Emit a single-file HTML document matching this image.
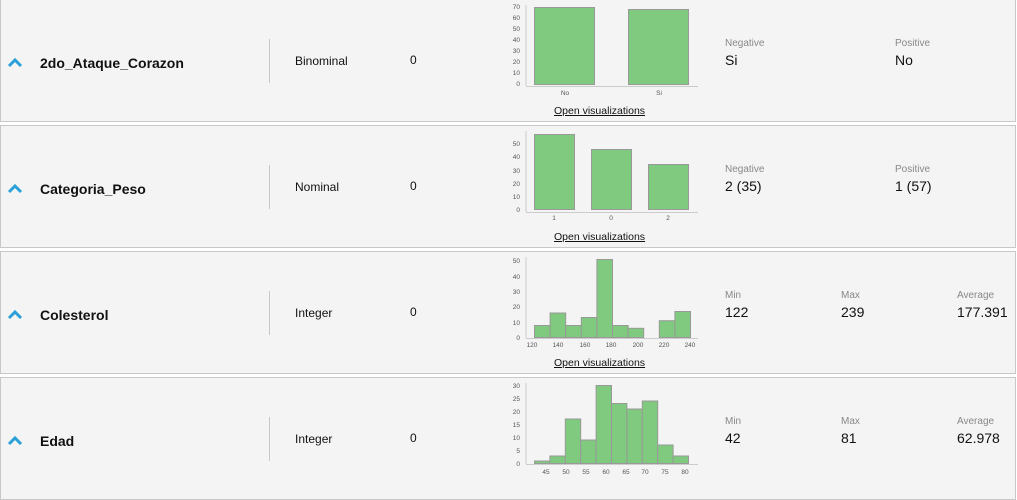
<!DOCTYPE html>
<html><head><meta charset="utf-8"><style>
body{margin:0;width:1017px;height:479px;background:#fff;font-family:"Liberation Sans",Arial,sans-serif;position:relative;overflow:hidden}
.row{position:absolute;left:0;width:1014px;height:121px;background:#f4f4f4;border:1px solid #c8c8c8}
.a{position:absolute;white-space:nowrap}
.name{font-weight:bold;font-size:14px;color:#111;left:40px}
.div{position:absolute;left:269px;width:1px;background:#c8c8c8}
.t{font-size:12px;color:#111}
.lab{font-size:10px;color:#888}
.val{font-size:14px;color:#111}
.lnk{font-size:10.5px;color:#111;text-decoration:underline;left:554px}
svg{position:absolute;left:0;top:0}
</style></head><body>
<div class="row" style="top:-1px"></div>
<div class="row" style="top:125px"></div>
<div class="row" style="top:251px"></div>
<div class="row" style="top:377px"></div>

<svg width="1017" height="479" font-family="Liberation Sans, Arial, sans-serif" font-size="6.5" fill="#555">
<g stroke="#2a9fd8" stroke-width="3" fill="none">
<polyline points="9,66 15,60 21,66"/><polyline points="9,192 15,186 21,192"/><polyline points="9,318 15,312 21,318"/><polyline points="9,444 15,438 21,444"/>
</g>
<g stroke="#ccc" stroke-width="1">
<line x1="526" y1="5" x2="526" y2="86"/><line x1="526" y1="86.5" x2="698" y2="86.5"/>
<line x1="526" y1="131" x2="526" y2="212"/><line x1="526" y1="212.5" x2="698" y2="212.5"/>
<line x1="526" y1="257" x2="526" y2="338"/><line x1="526" y1="338.5" x2="698" y2="338.5"/>
<line x1="526" y1="383" x2="526" y2="464"/><line x1="526" y1="464.5" x2="698" y2="464.5"/>
</g>
<g fill="#7fca7f" stroke="#999" stroke-width="1">
<rect x="534.5" y="7.5" width="60" height="77"/><rect x="628.5" y="9.5" width="60" height="75"/>
<rect x="534.5" y="134.5" width="40" height="75"/><rect x="591.5" y="149.5" width="40" height="60"/><rect x="648.5" y="164.5" width="40" height="45"/>
<rect x="534.5" y="325.5" width="15.6" height="12"/><rect x="550.1" y="313" width="15.6" height="24.5"/><rect x="565.7" y="325.5" width="15.6" height="12"/><rect x="581.3" y="317.5" width="15.6" height="20"/><rect x="596.9" y="259.5" width="15.6" height="78"/><rect x="612.5" y="325.5" width="15.6" height="12"/><rect x="628.1" y="328.3" width="15.6" height="9.2"/><rect x="659.3" y="320.7" width="15.6" height="16.8"/><rect x="674.9" y="311.5" width="15.6" height="26"/>
<rect x="534.5" y="461" width="15.4" height="2.5"/><rect x="549.9" y="456" width="15.4" height="7.5"/><rect x="565.3" y="419" width="15.4" height="44.5"/><rect x="580.7" y="440" width="15.4" height="23.5"/><rect x="596.1" y="385.5" width="15.4" height="78"/><rect x="611.5" y="403.5" width="15.4" height="60"/><rect x="626.9" y="409" width="15.4" height="54.5"/><rect x="642.3" y="401" width="15.4" height="62.5"/><rect x="657.7" y="445" width="15.4" height="18.5"/><rect x="673.1" y="456" width="15.4" height="7.5"/>
</g>
<g text-anchor="end">
<text x="520" y="86">0</text><text x="520" y="75">10</text><text x="520" y="64">20</text><text x="520" y="53">30</text><text x="520" y="42">40</text><text x="520" y="31">50</text><text x="520" y="20">60</text><text x="520" y="9">70</text>
<text x="520" y="212">0</text><text x="520" y="199">10</text><text x="520" y="186">20</text><text x="520" y="173">30</text><text x="520" y="159">40</text><text x="520" y="146">50</text>
<text x="520" y="340">0</text><text x="520" y="325">10</text><text x="520" y="309">20</text><text x="520" y="294">30</text><text x="520" y="279">40</text><text x="520" y="263">50</text>
<text x="520" y="466">0</text><text x="520" y="453">5</text><text x="520" y="440">10</text><text x="520" y="427">15</text><text x="520" y="414">20</text><text x="520" y="401">25</text><text x="520" y="388">30</text>
</g>
<g text-anchor="middle">
<text x="565" y="95">No</text><text x="659" y="95">Si</text>
<text x="554" y="220">1</text><text x="611" y="220">0</text><text x="668" y="220">2</text>
<text x="532" y="347">120</text><text x="558" y="347">140</text><text x="585" y="347">160</text><text x="611" y="347">180</text><text x="638" y="347">200</text><text x="664" y="347">220</text><text x="690" y="347">240</text>
<text x="546" y="474">45</text><text x="566" y="474">50</text><text x="586" y="474">55</text><text x="606" y="474">60</text><text x="626" y="474">65</text><text x="645" y="474">70</text><text x="665" y="474">75</text><text x="685" y="474">80</text>
</g>
</svg>

<div class="a name" style="top:55px">2do_Ataque_Corazon</div>
<div class="div" style="top:39px;height:44px"></div>
<div class="a t" style="left:295px;top:54px">Binominal</div>
<div class="a t" style="left:410px;top:53px">0</div>
<div class="a lnk" style="top:105px">Open visualizations</div>
<div class="a lab" style="left:725px;top:38px">Negative</div><div class="a val" style="left:725px;top:52px">Si</div>
<div class="a lab" style="left:895px;top:38px">Positive</div><div class="a val" style="left:895px;top:52px">No</div>

<div class="a name" style="top:181px">Categoria_Peso</div>
<div class="div" style="top:165px;height:44px"></div>
<div class="a t" style="left:295px;top:180px">Nominal</div>
<div class="a t" style="left:410px;top:179px">0</div>
<div class="a lnk" style="top:231px">Open visualizations</div>
<div class="a lab" style="left:725px;top:164px">Negative</div><div class="a val" style="left:725px;top:178px">2 (35)</div>
<div class="a lab" style="left:895px;top:164px">Positive</div><div class="a val" style="left:895px;top:178px">1 (57)</div>

<div class="a name" style="top:307px">Colesterol</div>
<div class="div" style="top:291px;height:44px"></div>
<div class="a t" style="left:295px;top:306px">Integer</div>
<div class="a t" style="left:410px;top:305px">0</div>
<div class="a lnk" style="top:357px">Open visualizations</div>
<div class="a lab" style="left:725px;top:290px">Min</div><div class="a val" style="left:725px;top:304px">122</div>
<div class="a lab" style="left:841px;top:290px">Max</div><div class="a val" style="left:841px;top:304px">239</div>
<div class="a lab" style="left:957px;top:290px">Average</div><div class="a val" style="left:957px;top:304px">177.391</div>

<div class="a name" style="top:433px">Edad</div>
<div class="div" style="top:417px;height:44px"></div>
<div class="a t" style="left:295px;top:432px">Integer</div>
<div class="a t" style="left:410px;top:431px">0</div>
<div class="a lab" style="left:725px;top:416px">Min</div><div class="a val" style="left:725px;top:430px">42</div>
<div class="a lab" style="left:841px;top:416px">Max</div><div class="a val" style="left:841px;top:430px">81</div>
<div class="a lab" style="left:957px;top:416px">Average</div><div class="a val" style="left:957px;top:430px">62.978</div>
</body></html>
